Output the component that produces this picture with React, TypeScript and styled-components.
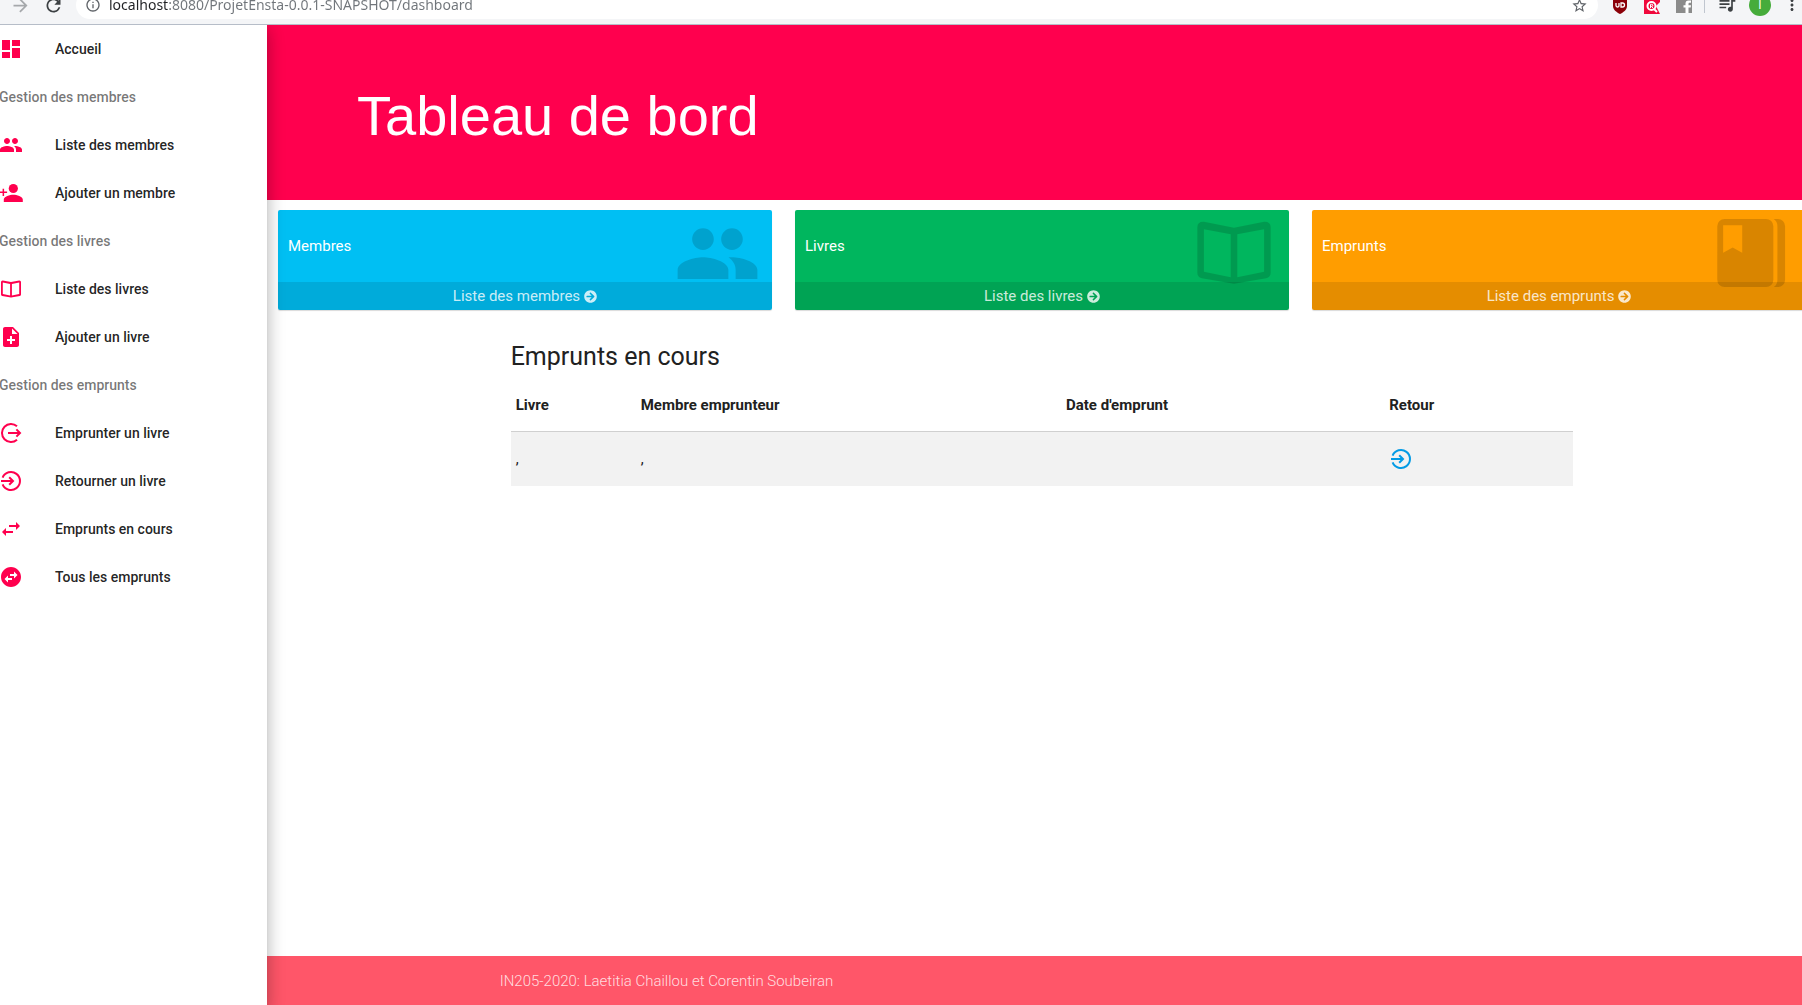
import React from "react";
import styled, { createGlobalStyle } from "styled-components";
import {
  MdArrowForward,
  MdDashboard,
  MdInfoOutline,
  MdMoreVert,
  MdNoteAdd,
  MdPeople,
  MdQueueMusic,
  MdRefresh,
  MdStarBorder,
  MdSwapHoriz,
  MdSwapHorizontalCircle,
} from "react-icons/md";
import { FaArrowCircleRight } from "react-icons/fa";

const GlobalStyle = createGlobalStyle`
  *, *::before, *::after { box-sizing: border-box; }
  html { font-size: 15px; }
  body {
    margin: 0;
    color: #212121;
    background: #fff;
    font-family: Roboto, "Liberation Sans", sans-serif;
    line-height: 1.5;
  }
  a { color: inherit; text-decoration: none; }
  svg { display: block; flex: none; }
`;

const accent = "#ff004e";

const Page = styled.div`
  display: flex;
  flex-direction: column;
  min-height: 100vh;
  overflow: hidden;
`;

/* ---------- Browser bar ---------- */

const BrowserBar = styled.div`
  display: flex;
  align-items: flex-end;
  height: 25px;
  flex: none;
  gap: 12px;
  padding: 0 1px 5px 10px;
  overflow: hidden;
  background: #f4f5f7;
  border-bottom: 1px solid #b6bdc8;
  position: relative;
  z-index: 3;
`;

const BarGroup = styled.div<{ $gap: number }>`
  display: flex;
  align-items: center;
  flex: none;
  gap: ${(p) => p.$gap}px;
  height: 28px;
`;

const BarButton = styled.button<{ $tone?: string }>`
  display: flex;
  align-items: center;
  justify-content: center;
  flex: none;
  padding: 0;
  border: 0;
  background: none;
  color: ${(p) => p.$tone ?? "#5f6368"};
  font: inherit;
`;

const AddressBar = styled.form`
  display: flex;
  align-items: center;
  flex: 1;
  gap: 8px;
  height: 28px;
  margin-right: 2px;
  padding: 0 10px 0 9px;
  border-radius: 14px;
  background: #fff;
  color: #5f6368;
`;

const AddressInput = styled.input`
  flex: 1;
  min-width: 0;
  height: 28px;
  padding: 0;
  border: 0;
  outline: 0;
  font: 14px/28px "Noto Sans", sans-serif;
  color: #70757a;
  background: linear-gradient(90deg, #202124 60px, #70757a 60px);
  -webkit-background-clip: text;
  background-clip: text;
  -webkit-text-fill-color: transparent;
`;

const Divider = styled.span`
  width: 1px;
  height: 16px;
  background: #c0c6cf;
`;

const Avatar = styled.button`
  display: flex;
  align-items: center;
  justify-content: center;
  width: 22px;
  height: 22px;
  padding: 0;
  border: 0;
  border-radius: 50%;
  background: #46ac3b;
  color: #fff;
  font: 12px/10px Roboto, sans-serif;
`;

/* ---------- Layout ---------- */

const Body = styled.div`
  display: flex;
  flex: 1;
`;

const Sidebar = styled.nav`
  position: relative;
  z-index: 2;
  flex: none;
  width: 268px;
  margin-left: -1px;
  background: #fff;
  box-shadow: 0 8px 17px 2px rgba(0, 0, 0, 0.14), 0 3px 14px 2px rgba(0, 0, 0, 0.12),
    0 5px 5px -3px rgba(0, 0, 0, 0.2);
`;

const Menu = styled.ul`
  margin: 0;
  padding: 0;
  list-style: none;
  font-size: 14px;
  font-weight: 500;
  line-height: 48px;
`;

const MenuLink = styled.a`
  display: flex;
  align-items: center;
  gap: 32px;
  height: 48px;
  color: rgba(0, 0, 0, 0.87);
  svg { color: ${accent}; }
`;

const MenuHeading = styled.li`
  height: 48px;
  color: rgba(0, 0, 0, 0.54);
`;

const Main = styled.div`
  display: flex;
  flex-direction: column;
  flex: 1;
  min-width: 0;
  margin-right: -16px;
`;

const Banner = styled.header`
  display: flex;
  align-items: center;
  height: 175px;
  padding: 6px 90px 0;
  background: ${accent};
`;

const Title = styled.h1`
  margin: 0;
  color: #fff;
  font: 400 56px/1.1 "Liberation Sans", Arial, sans-serif;
`;

const Cards = styled.section`
  display: grid;
  grid-template-columns: repeat(3, 1fr);
  gap: 23px;
  padding: 10px 12px 0 11px;
`;

const Card = styled.article<{ $color: string }>`
  position: relative;
  display: flex;
  flex-direction: column;
  height: 100px;
  border-radius: 2px;
  overflow: hidden;
  background: ${(p) => p.$color};
  color: #fff;
`;

const CardShadow = styled.div`
  border-radius: 2px;
  box-shadow: 0 1px 1px rgba(0, 0, 0, 0.15);
`;

const CardLabel = styled.p`
  flex: 1;
  margin: 0;
  padding: 0 10px;
  line-height: 72px;
`;

const CardArt = styled.span`
  position: absolute;
  top: -1px;
  right: 11px;
  display: grid;
  place-items: center;
  width: 88px;
  height: 88px;
  color: rgba(0, 0, 0, 0.15);
`;

const CardLink = styled.a`
  display: flex;
  align-items: center;
  justify-content: center;
  gap: 4px;
  height: 28px;
  background: rgba(0, 0, 0, 0.1);
  color: rgba(255, 255, 255, 0.8);
`;

const Container = styled.div`
  width: 70%;
  margin: 0 auto;
`;

const Loans = styled.section`
  padding: 31px 12px 0 11px;
`;

const SectionTitle = styled.h2`
  margin: 0 0 6px;
  font-size: 25px;
  font-weight: 400;
  line-height: 32px;
`;

const Table = styled.table`
  width: 100%;
  table-layout: fixed;
  border-collapse: collapse;
  thead { border-bottom: 1px solid #d0d0d0; }
  tbody tr { background: #f2f2f2; }
  th, td { padding: 15px 5px; text-align: left; }
  th { font-weight: 700; line-height: 22px; }
  td { height: 54px; line-height: 24px; }
`;

const Col = styled.col<{ $share: number }>`
  width: ${(p) => p.$share * 100}%;
`;

const ReturnLink = styled.a`
  display: inline-block;
  vertical-align: top;
  color: #039be5;
`;

const Footer = styled.footer`
  margin-top: auto;
  padding-top: 1px;
  background: #ff5669;
  color: rgba(255, 255, 255, 0.8);
  font-weight: 300;
  line-height: 48px;
`;

/* ---------- Icons ---------- */

type IconProps = { size?: number };

const BookIcon = ({ size = 24 }: IconProps) => (
  <svg width={size} height={size} viewBox="0 0 24 24" fill="currentColor" fillRule="evenodd" aria-hidden>
    <path d="M3.8 3.5 12 5.1l8.2-1.6Q22 3.4 22 5v12.4q0 1.2-1.2 1.5L12 20.4l-8.8-1.5Q2 18.6 2 17.4V5q0-1.6 1.8-1.5ZM3.8 5.5v11.6l7.3 1.5V6.9ZM20.2 5.5l-7.3 1.4v11.7l7.3-1.5Z" />
  </svg>
);

const CollectionIcon = ({ size = 24 }: IconProps) => (
  <svg width={size} height={size} viewBox="0 0 24 24" fill="currentColor" fillRule="evenodd" aria-hidden>
    <path d="M4.8 2.7h11.3a2 2 0 0 1 2 2v14.6a2 2 0 0 1-2 2H4.8a2 2 0 0 1-2-2V4.7a2 2 0 0 1 2-2ZM4.4 4.4v7.5l2.6-1.4 2.6 1.4V4.4Z" />
    <path d="M18.2 2.7h1.1a2 2 0 0 1 2 2v14.6a2 2 0 0 1-2 2h-1.1q1-.7 1-2V4.7q0-1.3-1-2Z" />
  </svg>
);

const PersonAddIcon = ({ size = 24 }: IconProps) => (
  <svg width={size} height={size} viewBox="0 0 24 24" fill="currentColor" aria-hidden>
    <circle cx="14.300" cy="7.500" r="4.600" />
    <path d="M14.300 13.700c3.400 0 9.500 1.600 9.500 4.900V21h-19v-2.400c0-3.300 6.100-4.900 9.500-4.900Z" />
    <path d="M3.600 7.800h1.500v2.800h3v1.500h-3v2.900H3.600v-2.900H.8v-1.500h2.800Z" />
  </svg>
);

const BorrowIcon = ({ size = 24 }: IconProps) => (
  <svg width={size} height={size} viewBox="0 0 24 24" fill="none" stroke="currentColor" aria-hidden>
    <path strokeWidth="2" d="M18 5.300A9 9 0 1 0 18 18.700" />
    <path strokeWidth="2" d="M9 12h12M17.400 8.400 21 12l-3.600 3.600" />
  </svg>
);

const ReturnIcon = ({ size = 24 }: IconProps) => (
  <svg width={size} height={size} viewBox="0 0 24 24" fill="none" stroke="currentColor" aria-hidden>
    <path strokeWidth="2" d="M3.600 8.700a9 9 0 1 1 0 6.600" />
    <path strokeWidth="2" d="M2 12h11.500M10.200 8.200 14 12l-3.800 3.800" />
  </svg>
);

const ShieldIcon = () => (
  <svg width="16" height="18" viewBox="0 0 16 18" aria-hidden>
    <path d="M8 0 15 3v7c0 4-4 6.500-7 8-3-1.500-7-4-7-8V3Z" fill="#8b0009" />
    <path d="M4 7v2.500q0 1.500 1.500 1.500T7 9.500V7M9 11V7h1.500a2 2 0 0 1 0 4Z" fill="none" stroke="#fff" strokeWidth="1.300" />
  </svg>
);

const RakutenIcon = () => (
  <svg width="16" height="18" viewBox="0 0 16 18" aria-hidden>
    <path d="M0 0h16v6l-4 4 4 8H0Z" fill="#f0083c" />
    <circle cx="7.500" cy="10" r="4" fill="none" stroke="#fff" strokeWidth="2" />
    <path d="M9.500 12.500 13 16" stroke="#fff" strokeWidth="2" />
    <path d="M6.500 12V8.300h1.300q1 0 1 1t-1 1H6.700M7.800 10.300l1 1.700" fill="none" stroke="#fff" />
  </svg>
);

const FacebookIcon = () => (
  <svg width="16" height="18" viewBox="0 0 16 18" aria-hidden>
    <path d="M0 1h16v16H0Z" fill="#8b8b8b" />
    <path d="M9.500 17v-5.500H7.500V9.200h2V7.500q0-3 3-3H15v2.300h-1.600q-.9 0-.9.900v1.500H15l-.3 2.300h-2.200V17Z" fill="#fff" />
  </svg>
);

/* ---------- Content ---------- */

type Entry = { label: string; icon?: React.ReactNode };

const menu: Entry[] = [
  { label: "Accueil", icon: <MdDashboard size={24} /> },
  { label: "Gestion des membres" },
  { label: "Liste des membres", icon: <MdPeople size={24} /> },
  { label: "Ajouter un membre", icon: <PersonAddIcon /> },
  { label: "Gestion des livres" },
  { label: "Liste des livres", icon: <BookIcon /> },
  { label: "Ajouter un livre", icon: <MdNoteAdd size={24} /> },
  { label: "Gestion des emprunts" },
  { label: "Emprunter un livre", icon: <BorrowIcon /> },
  { label: "Retourner un livre", icon: <ReturnIcon /> },
  { label: "Emprunts en cours", icon: <MdSwapHoriz size={24} /> },
  { label: "Tous les emprunts", icon: <MdSwapHorizontalCircle size={24} /> },
];

const cards = [
  { label: "Membres", link: "Liste des membres", color: "#00bff3", art: <MdPeople size={87} /> },
  { label: "Livres", link: "Liste des livres", color: "#00b65e", art: <BookIcon size={88} /> },
  { label: "Emprunts", link: "Liste des emprunts", color: "#ff9d00", art: <CollectionIcon size={88} /> },
];

const columns = [
  { label: "Livre", weight: 125 },
  { label: "Membre emprunteur", weight: 425 },
  { label: "Date d'emprunt", weight: 323 },
  { label: "Retour", weight: 189 },
];
const totalWeight = columns.reduce((sum, c) => sum + c.weight, 0);

export default function App() {
  return (
    <Page>
      <GlobalStyle />
      <BrowserBar>
        <BarGroup $gap={12}>
          <BarButton type="button" aria-label="Suivant" $tone="#a5a8ab"><MdArrowForward size={21} /></BarButton>
          <BarButton type="button" aria-label="Actualiser" $tone="#3c4043"><MdRefresh size={21} /></BarButton>
        </BarGroup>
        <AddressBar onSubmit={(e) => e.preventDefault()}>
          <MdInfoOutline size={16} />
          <AddressInput
            aria-label="Adresse"
            spellCheck={false}
            defaultValue="localhost:8080/ProjetEnsta-0.0.1-SNAPSHOT/dashboard"
          />
          <BarButton type="button" aria-label="Favori"><MdStarBorder size={17} /></BarButton>
        </AddressBar>
        <BarGroup $gap={16}>
          <BarButton type="button" aria-label="uBlock"><ShieldIcon /></BarButton>
          <BarButton type="button" aria-label="Rakuten"><RakutenIcon /></BarButton>
          <BarButton type="button" aria-label="Facebook"><FacebookIcon /></BarButton>
        </BarGroup>
        <BarGroup $gap={12}>
          <Divider />
          <BarButton type="button" aria-label="Musique" $tone="#3c4043"><MdQueueMusic size={20} /></BarButton>
          <Avatar type="button" aria-label="Profil">I</Avatar>
          <BarButton type="button" aria-label="Menu" $tone="#3c4043"><MdMoreVert size={18} /></BarButton>
        </BarGroup>
      </BrowserBar>
      <Body>
        <Sidebar>
          <Menu>
            {menu.map((m) =>
              m.icon ? (
                <li key={m.label}>
                  <MenuLink href="#">{m.icon}{m.label}</MenuLink>
                </li>
              ) : (
                <MenuHeading key={m.label}>{m.label}</MenuHeading>
              )
            )}
          </Menu>
        </Sidebar>
        <Main>
          <Banner><Title>Tableau de bord</Title></Banner>
          <Cards>
            {cards.map((c) => (
              <CardShadow key={c.label}>
                <Card $color={c.color}>
                  <CardLabel>{c.label}</CardLabel>
                  <CardArt>{c.art}</CardArt>
                  <CardLink href="#">{c.link}<FaArrowCircleRight size={13} /></CardLink>
                </Card>
              </CardShadow>
            ))}
          </Cards>
          <Container>
            <Loans>
              <SectionTitle>Emprunts en cours</SectionTitle>
              <Table>
                <colgroup>
                  {columns.map((c) => <Col key={c.label} $share={c.weight / totalWeight} />)}
                </colgroup>
                <thead>
                  <tr>{columns.map((c) => <th key={c.label} scope="col">{c.label}</th>)}</tr>
                </thead>
                <tbody>
                  <tr>
                    <td>,</td>
                    <td>,</td>
                    <td />
                    <td><ReturnLink href="#" aria-label="Retourner"><ReturnIcon /></ReturnLink></td>
                  </tr>
                </tbody>
              </Table>
            </Loans>
          </Container>
          <Footer><Container>IN205-2020: Laetitia Chaillou et Corentin Soubeiran</Container></Footer>
        </Main>
      </Body>
    </Page>
  );
}
